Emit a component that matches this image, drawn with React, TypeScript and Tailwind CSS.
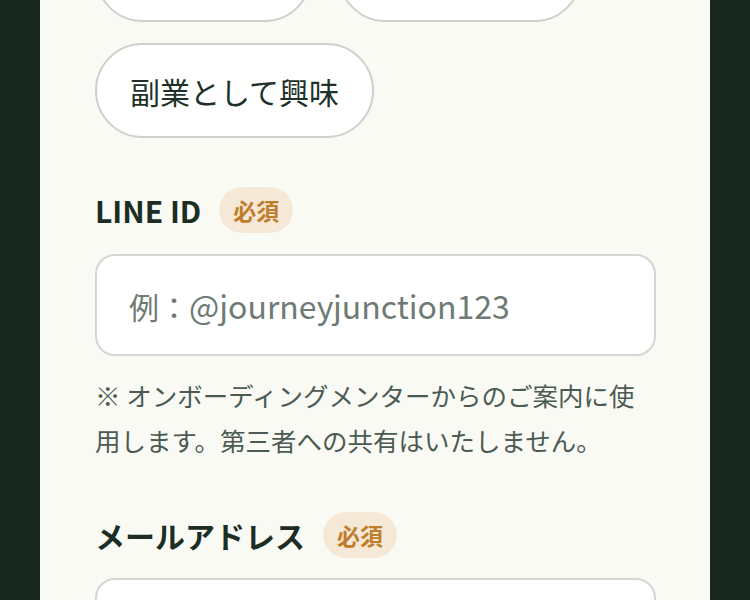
import React from "react";

const font = { fontFamily: '"Noto Sans CJK JP", "Noto Sans", sans-serif' };

function Badge() {
  return (
    <span className="inline-flex h-[46px] items-center rounded-full bg-[#f5e8d6] px-[14px] text-[23px] font-bold leading-none text-[#c07d2c]">
      必須
    </span>
  );
}

function Pill({ label, w }: { label: string; w?: string }) {
  return (
    <div
      className={`flex h-[95px] items-center justify-center whitespace-nowrap rounded-full border-2 border-[#cfcfcc] bg-white px-[33px] text-[30px] leading-none text-[#1e3128] ${w ?? ""}`}
    >
      {label}
    </div>
  );
}

export default function App() {
  return (
    <div className="h-[600px] w-[750px] overflow-hidden bg-[#1a291f]" style={font}>
      <div className="mx-[40px] mt-[-73px] bg-[#fafaf4] px-[55px] pb-[200px]">
        <div className="flex flex-col">
          <div className="flex flex-wrap gap-x-[26px] gap-y-[21px]">
            <Pill label="転職を検討" w="w-[217px] px-[20px]" />
            <Pill label="スキル習得" w="w-[244px] px-[20px]" />
            <Pill label="副業として興味" />
          </div>

          <div className="mt-[49px] flex items-center gap-[18px]">
            <span className="text-[30px] font-bold leading-none text-[#1c2e24]">LINE ID</span>
            <Badge />
          </div>
          <div className="mt-[21px] flex h-[102px] w-[561px] items-center rounded-[20px] border-2 border-[#d3d6d2] bg-white px-[32px]">
            <span className="text-[30px] leading-none text-[#6d7b74]">
              例：<span className="text-[32px]">@journeyjunction123</span>
            </span>
          </div>
          <p className="mt-[16px] w-[561px] text-[25.5px] leading-[45px] text-[#4b5a52]">
            ※ オンボーディングメンターからのご案内に使用します。第三者への共有はいたしません。
          </p>

          <div className="mt-[50px] flex items-center gap-[18px]">
            <span className="text-[30px] font-bold leading-none text-[#1c2e24]">メールアドレス</span>
            <Badge />
          </div>
          <div className="mt-[20px] flex h-[102px] w-[561px] items-center rounded-[20px] border-2 border-[#d3d6d2] bg-white px-[32px]" />
        </div>
      </div>
    </div>
  );
}
